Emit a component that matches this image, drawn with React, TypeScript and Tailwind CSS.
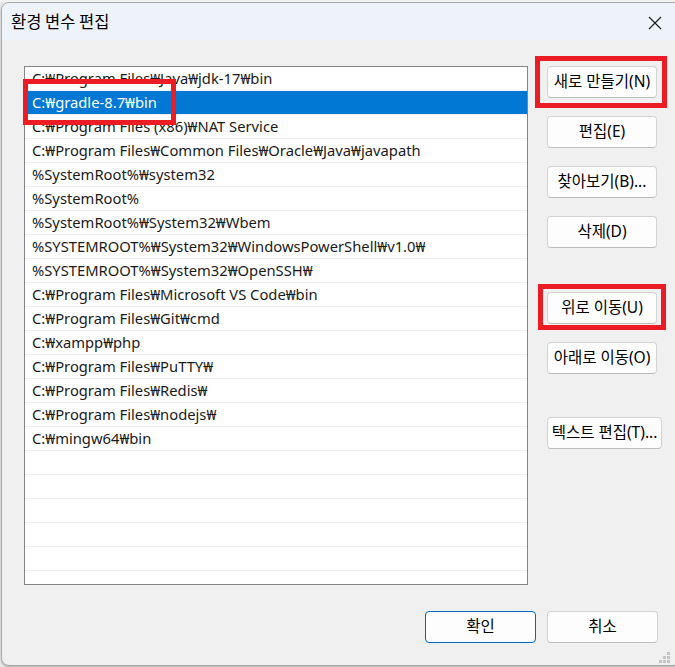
import React from "react";

const rows = [
  "C:₩Program Files₩Java₩jdk-17₩bin",
  "C:₩gradle-8.7₩bin",
  "C:₩Program Files (x86)₩NAT Service",
  "C:₩Program Files₩Common Files₩Oracle₩Java₩javapath",
  "%SystemRoot%₩system32",
  "%SystemRoot%",
  "%SystemRoot%₩System32₩Wbem",
  "%SYSTEMROOT%₩System32₩WindowsPowerShell₩v1.0₩",
  "%SYSTEMROOT%₩System32₩OpenSSH₩",
  "C:₩Program Files₩Microsoft VS Code₩bin",
  "C:₩Program Files₩Git₩cmd",
  "C:₩xampp₩php",
  "C:₩Program Files₩PuTTY₩",
  "C:₩Program Files₩Redis₩",
  "C:₩Program Files₩nodejs₩",
  "C:₩mingw64₩bin",
  "",
  "",
  "",
  "",
  "",
  "",
];

const font = { fontFamily: '"Noto Sans", "Noto Sans CJK KR", sans-serif' };

function Btn({ label, wide }: { label: string; wide?: boolean }) {
  return (
    <div
      className={`${wide ? "w-[115px]" : "w-[110px]"} h-[32px] shrink-0 flex items-center justify-center rounded-[4px] border border-[#d3d3d3] border-b-[#bdbdbd] bg-[#fdfdfd] text-[15.5px] text-black whitespace-nowrap`}
    >
      {label}
    </div>
  );
}

export default function App() {
  return (
    <div
      className="relative w-[675px] h-[667px] bg-[#e9e9e9] overflow-hidden"
      style={font}
    >
      <div className="absolute left-0 top-0 w-[675px] h-[2px] bg-[#f2f2f2]" />
      <div className="ml-[1px] mt-[2px] w-[680px] h-[664px] rounded-[8px] border border-[#a8a8a8] bg-[#f0f0f0] overflow-hidden flex flex-col shadow-[0_1px_2px_rgba(0,0,0,0.25)]">
        {/* Title bar */}
        <div className="h-[37px] shrink-0 bg-[#eef3f9] flex items-center pl-[9px]">
          <span className="text-[16.5px] text-black" style={{ fontFamily: '"Noto Sans CJK KR", sans-serif' }}>
            환경 변수 편집
          </span>
          <div className="ml-auto mr-[17px] flex items-center justify-center w-[16px] h-[16px] mt-[2px]">
            <svg width="14" height="14" viewBox="0 0 14 14">
              <path d="M1 1 L13 13 M13 1 L1 13" stroke="#1a1a1a" strokeWidth="1.1" />
            </svg>
          </div>
        </div>

        {/* Body */}
        <div className="flex-1 flex flex-col pl-[22px] pt-[26px]">
          <div className="flex">
            <div className="w-[504px] h-[519px] border border-[#858585] bg-white overflow-hidden shrink-0">
              {rows.map((r, i) => (
                <div
                  key={i}
                  className={`h-[24px] border-b border-[#f0f0f0] flex items-center pl-[7px] text-[14.75px] whitespace-nowrap leading-none ${
                    i === 1 ? "bg-[#0078d4] text-white border-[#0078d4]" : "text-[#1a1a1a]"
                  }`}
                >
                  {r}
                </div>
              ))}
            </div>
            <div className="ml-[19px] flex flex-col">
              <Btn label="새로 만들기(N)" />
              <div className="h-[18px]" />
              <Btn label="편집(E)" />
              <div className="h-[18px]" />
              <Btn label="찾아보기(B)..." />
              <div className="h-[18px]" />
              <Btn label="삭제(D)" />
              <div className="h-[44px]" />
              <Btn label="위로 이동(U)" />
              <div className="h-[18px]" />
              <Btn label="아래로 이동(O)" />
              <div className="h-[43px]" />
              <Btn label="텍스트 편집(T)..." wide />
            </div>
          </div>
          <div className="flex mt-[26px] pl-[401px] gap-[11px]">
            <div className="w-[111px] h-[32px] flex items-center justify-center rounded-[4px] border border-[#0067c0] bg-[#fdfdfd] text-[15.5px] text-black">
              확인
            </div>
            <div className="w-[111px] h-[32px] flex items-center justify-center rounded-[4px] border border-[#d3d3d3] border-b-[#bdbdbd] bg-[#fdfdfd] text-[15.5px] text-black">
              취소
            </div>
          </div>
        </div>
      </div>

      {/* resize grip */}
      <div className="absolute left-[667px] top-[652px] w-[3px] h-[3px] bg-[#c4c4c4]" />
      <div className="absolute left-[663px] top-[656px] w-[3px] h-[3px] bg-[#c4c4c4]" />
      <div className="absolute left-[667px] top-[656px] w-[3px] h-[3px] bg-[#c4c4c4]" />
      <div className="absolute left-[659px] top-[660px] w-[3px] h-[3px] bg-[#c4c4c4]" />
      <div className="absolute left-[663px] top-[660px] w-[3px] h-[3px] bg-[#c4c4c4]" />
      <div className="absolute left-[667px] top-[660px] w-[3px] h-[3px] bg-[#c4c4c4]" />

      {/* red annotation boxes */}
      <div className="absolute left-[23px] top-[79px] w-[153px] h-[46px] border-[5px] border-[#ec1c24]" />
      <div className="absolute left-[535px] top-[56px] w-[132px] h-[52px] border-[5px] border-[#ec1c24]" />
      <div className="absolute left-[538px] top-[284px] w-[128px] h-[46px] border-[5px] border-[#ec1c24]" />
    </div>
  );
}
